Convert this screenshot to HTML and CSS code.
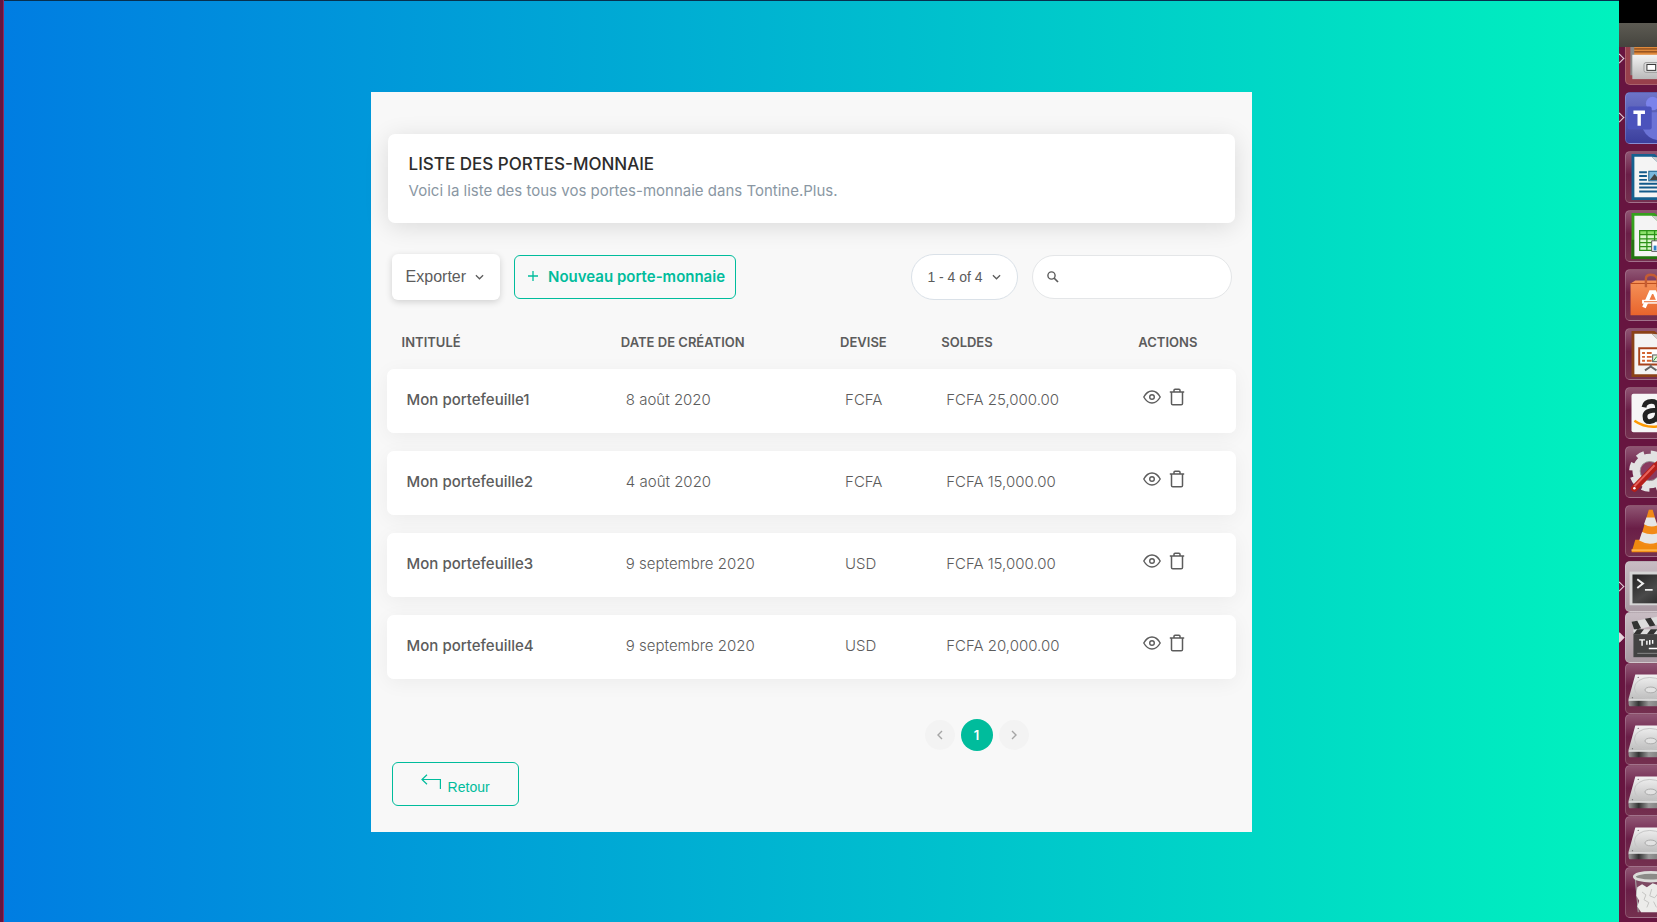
FILE: index.html
```html
<!DOCTYPE html>
<html lang="fr">
<head>
<meta charset="utf-8">
<title>Liste des portes-monnaie</title>
<link rel="stylesheet" href="styles.css">
</head>
<body>
<svg class="defs" aria-hidden="true">
  <defs>
    <linearGradient id="g-metal" x1="0" y1="0" x2="0" y2="1"><stop offset="0" stop-color="#f2f2f2"/><stop offset="1" stop-color="#b9b9b9"/></linearGradient>
    <linearGradient id="g-dark" x1="0" y1="0" x2="1" y2="0"><stop offset="0" stop-color="#999"/><stop offset="0.3" stop-color="#333"/><stop offset="0.6" stop-color="#999"/><stop offset="1" stop-color="#777"/></linearGradient>
    <linearGradient id="g-orange" x1="0" y1="0" x2="0" y2="1"><stop offset="0" stop-color="#f5935a"/><stop offset="1" stop-color="#e8642c"/></linearGradient>
    <linearGradient id="g-term" x1="0" y1="0" x2="1" y2="1"><stop offset="0" stop-color="#222"/><stop offset="0.5" stop-color="#4a4a4a"/><stop offset="1" stop-color="#1d1d1d"/></linearGradient>
    <symbol id="i-eye" viewBox="0 0 18 18"><g fill="none" stroke="currentColor" stroke-width="1.4"><path d="M.8 9C3 5 5.800 3 9 3S15 5 17.200 9C15 13 12.200 15 9 15S3 13 .8 9Z"/><circle cx="9" cy="9" r="2.300"/></g></symbol>
    <symbol id="i-trash" viewBox="0 0 16 18"><path d="M.8 4h14.400M5 4V2.200Q5 1.200 6 1.200h4q1 0 1 1V4M2.500 4v11.500q0 1.300 1.300 1.300h8.400q1.300 0 1.300-1.300V4" fill="none" stroke="currentColor" stroke-width="1.500"/></symbol>
    <symbol id="i-down" viewBox="0 0 10 6"><path d="M1 1l4 4 4-4" fill="none" stroke="currentColor" stroke-width="1.400"/></symbol>
    <symbol id="i-disk" viewBox="0 0 38 51">
      <path d="M10 11H38V39H3V36Z" fill="url(#g-metal)"/>
      <path d="M3 38H38V44H5Q3 44 3 41Z" fill="url(#g-dark)"/><path d="M3 37.500H38" stroke="#fafafa"/>
      <ellipse cx="25" cy="25" rx="16" ry="11" fill="none" stroke="#c4c4c4"/><ellipse cx="26" cy="27" rx="6" ry="3" fill="#e2e2e2" stroke="#aaa"/>
      <circle cx="13" cy="14" r=".7" fill="#777"/><circle cx="7" cy="35" r=".7" fill="#777"/>
    </symbol>
  </defs>
</svg>

<div class="edge"></div>

<main class="page">
  <section class="card">
    <header class="intro">
      <h1>LISTE DES PORTES-MONNAIE</h1>
      <p>Voici la liste des tous vos portes-monnaie dans Tontine.Plus.</p>
    </header>

    <div class="toolbar">
      <button class="btn btn-export" type="button" aria-haspopup="menu">Exporter <svg class="chevron"><use href="#i-down"/></svg></button>
      <a class="btn btn-outline btn-new" href="#nouveau"><svg class="plus" viewBox="0 0 10 10"><path d="M5 0v10M0 5h10" stroke="currentColor" stroke-width="1.300"/></svg>Nouveau porte-monnaie</a>
      <div class="range">
        <select aria-label="Lignes affichées"><option>1 - 4 of 4</option></select>
        <svg class="chevron"><use href="#i-down"/></svg>
      </div>
      <label class="search">
        <svg viewBox="0 0 12 12"><circle cx="4.500" cy="4.500" r="3.600" fill="none" stroke="currentColor" stroke-width="1.400"/><path d="M7 7l4 4" stroke="currentColor" stroke-width="1.700"/></svg>
        <input type="search" aria-label="Rechercher">
      </label>
    </div>

    <table class="wallets">
      <colgroup><col class="c-name"><col class="c-date"><col class="c-cur"><col class="c-sum"><col class="c-act"></colgroup>
      <thead><tr><th>INTITULÉ</th><th>DATE DE CRÉATION</th><th>DEVISE</th><th>SOLDES</th><th>ACTIONS</th></tr></thead>
      <tbody>
        <tr><td>Mon portefeuille1</td><td>8 août 2020</td><td>FCFA</td><td>FCFA 25,000.00</td><td><div class="acts"><a href="#voir1" aria-label="Voir"><svg class="eye"><use href="#i-eye"/></svg></a><a href="#suppr1" aria-label="Supprimer"><svg class="trash"><use href="#i-trash"/></svg></a></div></td></tr>
        <tr><td>Mon portefeuille2</td><td>4 août 2020</td><td>FCFA</td><td>FCFA 15,000.00</td><td><div class="acts"><a href="#voir2" aria-label="Voir"><svg class="eye"><use href="#i-eye"/></svg></a><a href="#suppr2" aria-label="Supprimer"><svg class="trash"><use href="#i-trash"/></svg></a></div></td></tr>
        <tr><td>Mon portefeuille3</td><td>9 septembre 2020</td><td>USD</td><td>FCFA 15,000.00</td><td><div class="acts"><a href="#voir3" aria-label="Voir"><svg class="eye"><use href="#i-eye"/></svg></a><a href="#suppr3" aria-label="Supprimer"><svg class="trash"><use href="#i-trash"/></svg></a></div></td></tr>
        <tr><td>Mon portefeuille4</td><td>9 septembre 2020</td><td>USD</td><td>FCFA 20,000.00</td><td><div class="acts"><a href="#voir4" aria-label="Voir"><svg class="eye"><use href="#i-eye"/></svg></a><a href="#suppr4" aria-label="Supprimer"><svg class="trash"><use href="#i-trash"/></svg></a></div></td></tr>
      </tbody>
    </table>

    <nav class="pager" aria-label="Pagination">
      <button type="button" disabled aria-label="Précédent"><svg viewBox="0 0 6 10"><path d="M5 1L1 5l4 4" fill="none" stroke="currentColor" stroke-width="1.400"/></svg></button>
      <button type="button" class="current" aria-current="page">1</button>
      <button type="button" disabled aria-label="Suivant"><svg viewBox="0 0 6 10"><path d="M1 1l4 4-4 4" fill="none" stroke="currentColor" stroke-width="1.400"/></svg></button>
    </nav>

    <a class="btn btn-outline btn-back" href="#retour"><svg viewBox="0 0 20 16"><path d="M19.400 15V5.500H1M6 .8L1 5.500l5 4.700" fill="none" stroke="currentColor" stroke-width="1.200"/></svg>Retour</a>
  </section>
</main>

<aside class="dock">
  <div class="dock-top"></div>
  <div class="dock-bar"></div>
  <div class="tile tile-first"><i class="pip"></i><svg viewBox="0 14 38 38"><path d="M5 14h5v29H5z" fill="#888"/><path d="M9 14H38V24H9z" fill="#e08a3c"/><path d="M9 16H38M9 19H38" stroke="#6d3512"/><path d="M7 22H38V47H7z" fill="url(#g-metal)"/><rect x="19" y="30" width="20" height="10" rx="2" fill="#ddd" stroke="#999"/><rect x="22" y="32" width="9" height="6" fill="#fff" stroke="#333"/></svg></div>
  <div class="tile teams"><i class="pip"></i><svg viewBox="0 0 38 52"><circle cx="28" cy="11" r="7" fill="#7b83eb"/><path d="M18 20H38V49Q24 50 18 38Z" fill="#6b73d6"/><rect x="2" y="14" width="25" height="24" rx="2" fill="#4b53bc"/><path d="M8 20H20M14 20V34" stroke="#fff" stroke-width="3.500"/></svg></div>
  <div class="tile"><svg viewBox="0 0 38 52"><path d="M6 2H30L38 9V50H6z" fill="#15608f"/><path d="M9 5H27L38 15V47H9z" fill="#f4f4f4"/><path d="M27 5l11 1v9z" fill="#ccc"/><path d="M14 21H22M14 25H22M14 29H22M14 33H38M14 37H38M14 41H38" stroke="#135a8a" stroke-width="2"/><rect x="24" y="20" width="14" height="10" fill="#79b7dc" stroke="#135a8a"/><path d="M25 29l5-6 5 6z" fill="#444"/></svg></div>
  <div class="tile"><svg viewBox="0 0 38 52"><path d="M6 2H30L38 9V50H6z" fill="#35a01c"/><path d="M6 30H38V50H6z" fill="#23760f"/><path d="M9 5H27L38 15V47H9z" fill="#f4f4f4"/><path d="M27 5l11 1v9z" fill="#ccc"/><path d="M14 20H38V41H14z" fill="#d6f7c8"/><path d="M14 20H38V24H14z" fill="#8ae06a"/><path d="M14.500 20V41M22 20V41M30 20V41M14 20.500H38M14 24.500H38M14 29H38M14 33H38M14 37H38M14 41H38" stroke="#2b9117" stroke-width="1.300"/><path d="M27 31H38V42H27z" fill="#fff" stroke="#555"/><path d="M29 36h3v5h-3z" fill="#2f83c5"/><path d="M33 34h3v7h-3z" fill="#f2972e"/></svg></div>
  <div class="tile"><svg viewBox="0 0 38 52"><path d="M5 14L10 11H38V47H5z" fill="url(#g-orange)"/><path d="M5 14H38" stroke="#b94a1b"/><path d="M21 18V9Q21 5 26 5T33 9V18" fill="none" stroke="#c45c33" stroke-width="2.500"/><path d="M19 39L26 23H30L37 39" fill="none" stroke="#fff" stroke-width="4"/><path d="M17 33H38" stroke="#fff" stroke-width="4"/><path d="M19 33H38" stroke="#e8642c"/></svg></div>
  <div class="tile"><svg viewBox="0 0 38 52"><path d="M6 2H30L38 9V50H6z" fill="#8b4218"/><path d="M9 5H27L38 15V47H9z" fill="#f4f4f4"/><path d="M27 5l11 1v9z" fill="#ccc"/><path d="M14 20H38V37H14z" fill="#fff" stroke="#a8421a" stroke-width="2"/><path d="M17 25H20M17 29H20M17 33H20M22 25H27M22 29H27M22 33H27" stroke="#d2622d" stroke-width="2"/><rect x="28" y="27" width="9" height="7" fill="#e5f3dd" stroke="#555"/><path d="M29 33l3-4 2 2 3-3" fill="none" stroke="#25952a"/><path d="M26 37v2l-6 4M26 39l6 4" fill="none" stroke="#666" stroke-width="2"/></svg></div>
  <div class="tile"><svg viewBox="0 0 38 52"><rect x="6" y="6" width="40" height="40" rx="2" fill="#f6f6f6"/><path d="M19 20Q20 14 27 14Q33 14 33 20V31Q33 34 36 35M33 23Q20 23 20 29Q20 35 25 35Q33 34 33 26" fill="none" stroke="#222" stroke-width="5"/><path d="M9 34Q22 43 38 39" fill="none" stroke="#f90" stroke-width="2.500"/></svg></div>
  <div class="tile"><svg viewBox="0 0 38 52"><circle cx="25" cy="25" r="14" fill="none" stroke="#e2e2e2" stroke-width="8"/><circle cx="25" cy="25" r="19" fill="none" stroke="#e2e2e2" stroke-width="5" stroke-dasharray="8 7"/><circle cx="25" cy="25" r="10" fill="#8a3b60" stroke="#999"/><path d="M9 43L31 20L38 15" fill="none" stroke="#b51f1a" stroke-width="7" stroke-linecap="round"/><path d="M9 41L30 19" stroke="#e8625c" stroke-width="2"/><circle cx="9" cy="43" r="1.300" fill="#fff"/></svg></div>
  <div class="tile"><svg viewBox="0 0 38 52"><path d="M10 35H38V48H6z" fill="#f08a10"/><path d="M6 46H38" stroke="#ffb347" stroke-width="2"/><path d="M24 4H28L38 38Q26 46 14 38z" fill="#f28a18"/><path d="M21.500 12H30L33 20Q26 23 19 19z" fill="#e6e6e6"/><path d="M17 27Q26 31 35 28L38 35Q26 43 14 36z" fill="#e6e6e6"/></svg></div>
  <div class="tile lit"><i class="pip"></i><svg viewBox="0 0 38 51"><rect x="4" y="10" width="44" height="35" fill="#d5d5d5"/><rect x="7" y="13" width="44" height="30" fill="url(#g-term)"/><path d="M12 18l6 4.500-6 4.500M20 29h8" fill="none" stroke="#eee" stroke-width="2"/></svg></div>
  <div class="tile lit"><i class="pip full"></i><svg viewBox="0 0 38 51"><path d="M8 20H38V46H8z" fill="#434343"/><path d="M6 9L38 3V11L9 18z" fill="#ddd"/><path d="M6 9l6-1 4 8-7 2zM20 6l6-1 5 8-6 1z" fill="#333"/><path d="M8 17H38V22H8z" fill="#ddd"/><path d="M12 17h7l-4 5H8zM26 17h7l-4 5h-7z" fill="#333"/><path d="M14 28H20M17 28V34M22 29v4M25 28v5M28 28v4M24 37H36" stroke="#fff" stroke-width="1.500"/><path d="M12 42H38" stroke="#888"/></svg></div>
  <div class="tile"><svg viewBox="0 0 38 51"><use href="#i-disk"/></svg></div>
  <div class="tile"><svg viewBox="0 0 38 51"><use href="#i-disk"/></svg></div>
  <div class="tile"><svg viewBox="0 0 38 51"><use href="#i-disk"/></svg></div>
  <div class="tile"><svg viewBox="0 0 38 51"><use href="#i-disk"/></svg></div>
  <div class="tile"><svg viewBox="0 0 38 51"><path d="M9 9L13 46H38V9z" fill="#7d4a63"/><path d="M10 10L13 46" stroke="#aaa"/><path d="M12 20l5-3 5 3 6-4 10 3V46H16l-4-6 2-6-3-5z" fill="#ececea"/><path d="M17 25l4 3-2 5 5 3-2 5M27 22l-2 7 5 2 4-5M29 35l3 6" fill="none" stroke="#c2c2c0"/><ellipse cx="26" cy="9" rx="17" ry="4.500" fill="#8b8b88" stroke="#dcdcda" stroke-width="3"/></svg></div>
</aside>
</body>
</html>
```

FILE: styles.css
```css
* { box-sizing: border-box; }

body {
  margin: 0;
  min-height: 100vh;
  display: flex;
  background: #671540;
  font-family: Inter, "Open Sans", sans-serif;
  font-size: 14px;
  color: #5c5c5c;
}

a { color: inherit; text-decoration: none; }
button, select, input { font: inherit; color: inherit; margin: 0; }
svg { display: block; }
.defs { position: absolute; width: 0; height: 0; }

.edge {
  flex: none;
  width: 4px;
  border-right: 1px solid #93285f;
}

.page {
  flex: 1;
  min-width: 0;
  padding: 91px 0 90px;
  border-top: 1px solid #07304f;
  background: linear-gradient(to right, #007de2, #00f2be);
}

.card {
  width: 54.6%;
  min-width: 760px;
  margin: 0 auto;
  padding: 42px 16px 26px;
  display: flex;
  flex-direction: column;
  background: #f8f8f8;
}

.intro {
  margin: 0 1px;
  padding: 20px 21px 21px;
  background: #fff;
  border-radius: 7px;
  box-shadow: 0 4px 24px rgba(0, 0, 0, .12);
}
.intro h1 {
  margin: 0;
  font-size: 17px;
  line-height: 20px;
  font-weight: 500;
  color: #2c2c2c;
}
.intro p {
  margin: 6px 0 0;
  font-size: 15px;
  line-height: 22px;
  color: #8a97a3;
}

.toolbar {
  display: flex;
  align-items: center;
  gap: 14px;
  margin: 31px 4px 16px 5px;
}

.btn {
  display: flex;
  align-items: center;
  height: 44px;
  border-radius: 6px;
}
.btn-export {
  gap: 9px;
  height: 46px;
  padding: 0 16px 0 14px;
  border: 0;
  background: #fff;
  box-shadow: 0 2px 7px rgba(0, 0, 0, .16);
  font-family: "Liberation Sans", sans-serif;
  font-size: 16px;
}
.chevron { width: 9px; height: 6px; }
.btn-outline {
  border: 1px solid #00bc9c;
  color: #00bc9c;
}
.btn-new {
  gap: 10px;
  padding: 0 10px 2px 13px;
  font-size: 15px;
  font-weight: 600;
}
.plus { width: 10px; height: 10px; }

.range {
  display: grid;
  align-items: center;
  margin-left: auto;
}
.range select {
  grid-area: 1 / 1;
  appearance: none;
  width: 107px;
  height: 46px;
  padding: 0 30px 0 15px;
  border: 1px solid #dae1e8;
  border-radius: 23px;
  background: #fff;
  font-family: "Liberation Sans", sans-serif;
  font-size: 14px;
}
.range .chevron {
  grid-area: 1 / 1;
  justify-self: end;
  margin-right: 17px;
  pointer-events: none;
}

.search {
  display: flex;
  align-items: center;
  gap: 8px;
  width: 200px;
  height: 44px;
  padding: 0 14px;
  border: 1px solid #e4e6e8;
  border-radius: 22px;
  background: #fff;
}
.search svg { width: 12px; height: 12px; }
.search input {
  flex: 1;
  min-width: 0;
  border: 0;
  outline: 0;
  background: none;
}

.wallets {
  width: 100%;
  table-layout: fixed;
  border-collapse: separate;
  border-spacing: 0 18px;
}
.c-name, .c-date { width: 25.8%; }
.c-cur { width: 11.9%; }
.c-sum { width: 23.2%; }
.c-act { width: 13.3%; }
.wallets th {
  padding: 0 0 0 15px;
  font-size: 13px;
  line-height: 17px;
  font-weight: 600;
  text-align: left;
}
.wallets td {
  height: 64px;
  padding: 0 0 4px 20px;
  background: #fff;
  font-size: 15px;
  font-weight: 300;
}
.wallets td:first-child {
  font-weight: 500;
  border-radius: 7px 0 0 7px;
}
.wallets td:last-child { border-radius: 0 7px 7px 0; }
.wallets tbody tr {
  border-radius: 7px;
  box-shadow: 0 4px 20px rgba(0, 0, 0, .05);
}
.acts {
  display: flex;
  align-items: center;
  gap: 8px;
  padding-bottom: 4px;
}
.eye { width: 18px; height: 18px; }
.trash { width: 16px; height: 18px; }

.pager {
  display: flex;
  justify-content: center;
  align-items: center;
  gap: 6px;
  margin: 22px 0 11px 330px;
}
.pager button {
  display: grid;
  place-items: center;
  width: 30px;
  height: 30px;
  padding: 0;
  border: 0;
  border-radius: 50%;
  background: #f3f3f3;
  color: #a5a5a5;
}
.pager svg { width: 6px; height: 10px; }
.pager .current {
  width: 32px;
  height: 32px;
  background: #00bc9c;
  color: #fff;
  font-size: 13px;
  font-weight: 600;
}

.btn-back {
  align-self: flex-start;
  align-items: flex-end;
  gap: 7px;
  margin-left: 5px;
  padding: 0 28px 9px;
  font: 14px/18px "Liberation Sans", sans-serif;
}
.btn-back svg { width: 20px; height: 16px; margin-bottom: 6px; }

.dock {
  flex: none;
  width: 38px;
  height: 922px;
  overflow: hidden;
}
.dock-top { height: 23px; background: #000; }
.dock-bar { height: 24px; background: linear-gradient(#5d5b53, #45443e); }
.tile {
  position: relative;
  height: 52px;
  margin: 0 0 7px 6px;
  border: solid rgba(255, 255, 255, .18);
  border-width: 1px 0 1px 1px;
  border-radius: 5px 0 0 5px;
  background: linear-gradient(#8f5573, #6a1e47 45%, #74304f);
}
.tile svg { width: 38px; height: 100%; margin-left: -1px; overflow: visible; }
.tile-first { height: 38px; border-top: 0; border-radius: 0 0 0 5px; background: #98404c; }
.teams { background: linear-gradient(#6d74c8, #3b3f9d); }
.lit { background: linear-gradient(#c8bcc3, #a899a2); }
.tile:nth-child(11) { margin-bottom: 4px; }
.tile:nth-child(n+12) { height: 51px; margin-bottom: 0; }
.pip {
  position: absolute;
  left: -10px;
  top: 50%;
  width: 7px;
  height: 7px;
  margin-top: -4px;
  border: solid #e3d3dc;
  border-width: 1px 1px 0 0;
  transform: rotate(45deg);
}
.tile-first .pip { top: 12px; }
.full { background: #e3d3dc; }
```
